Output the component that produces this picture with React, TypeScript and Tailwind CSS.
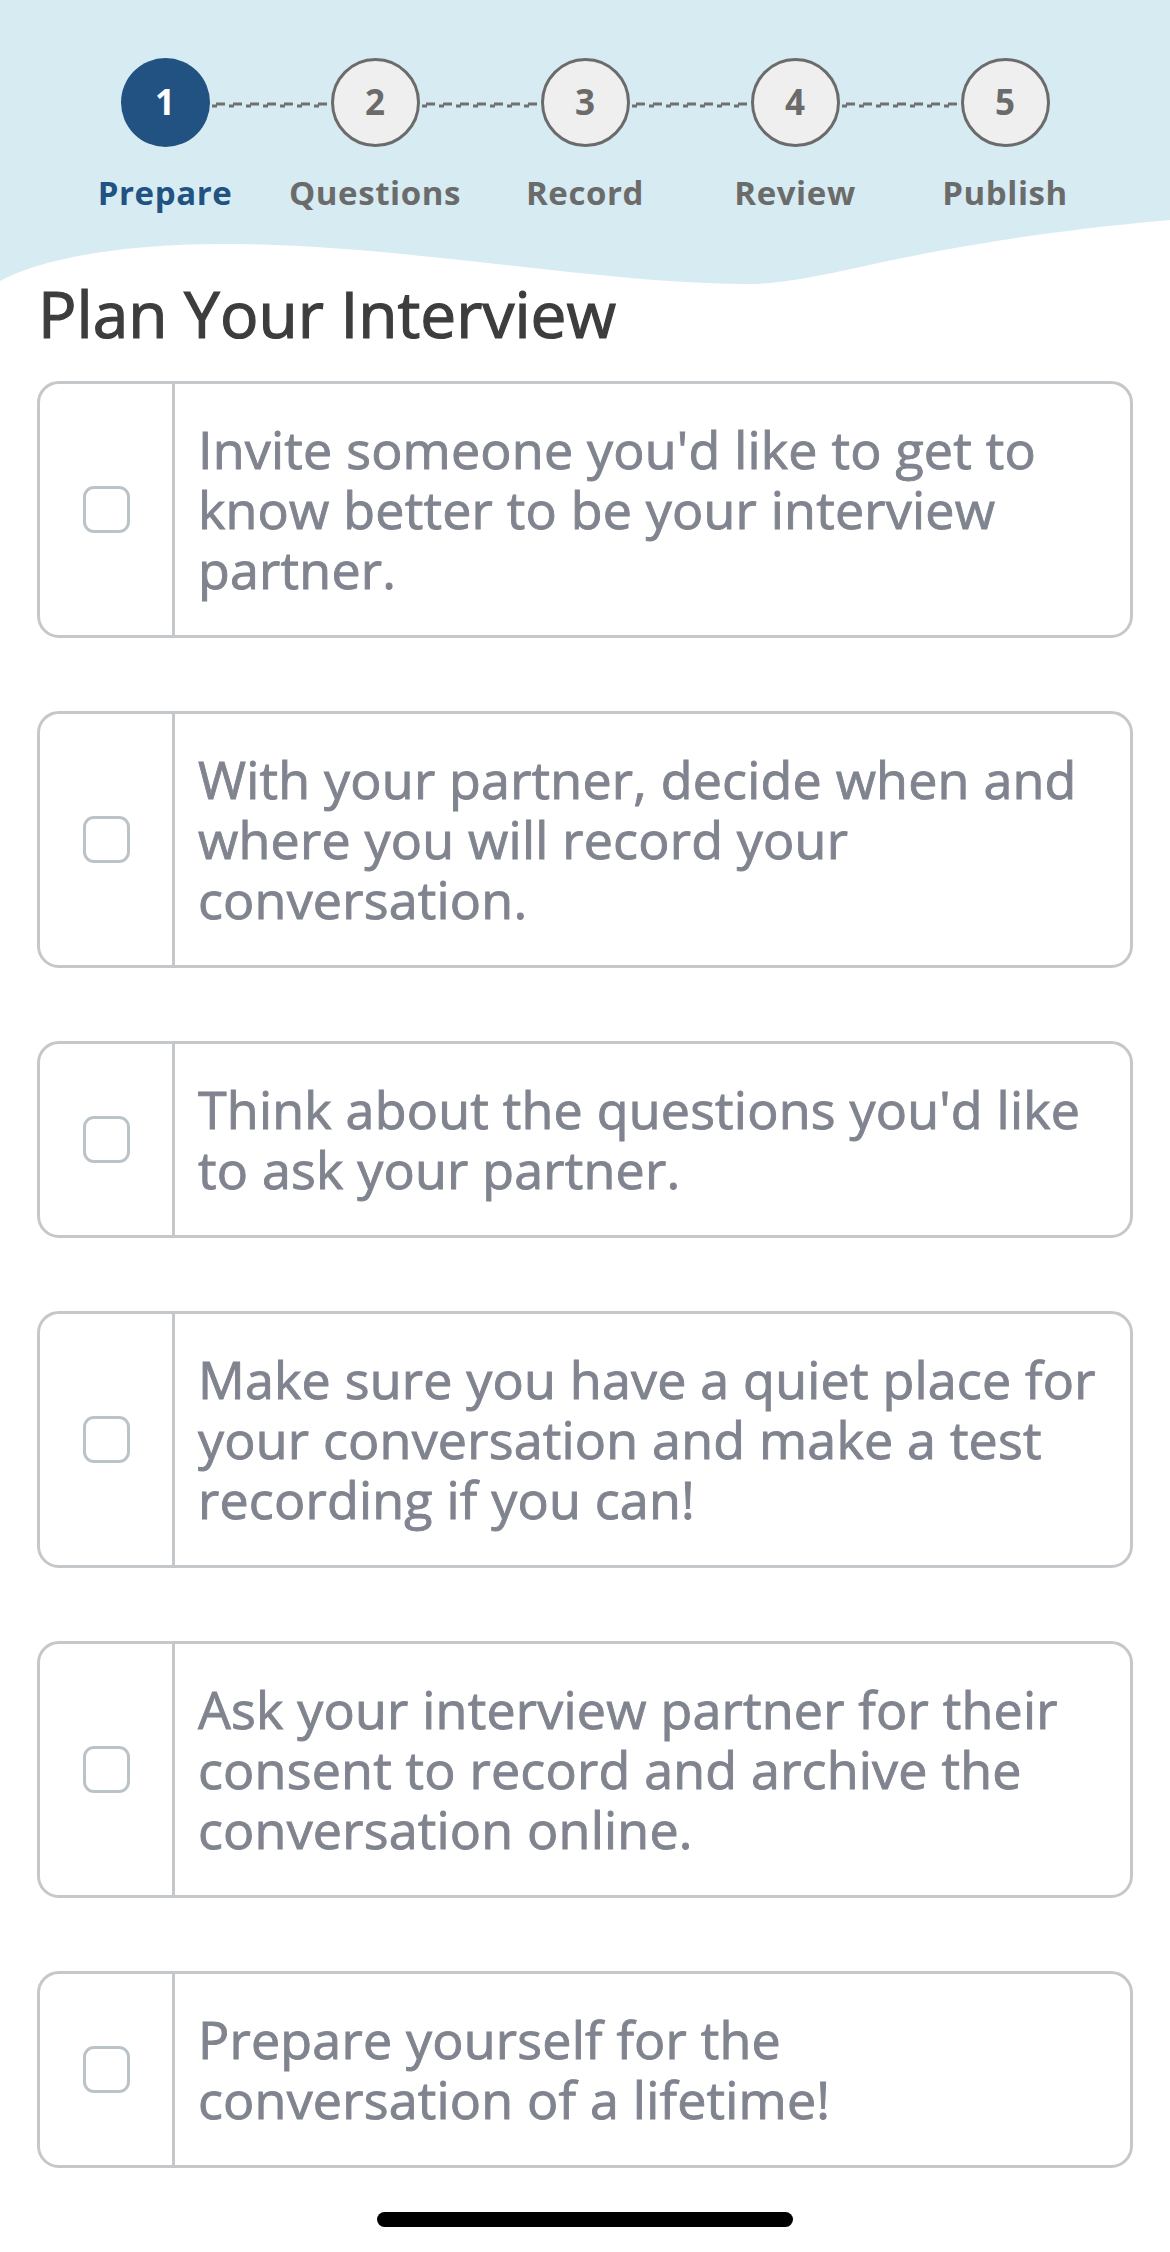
import React from "react";

const steps = [
  { n: "1", label: "Prepare", active: true },
  { n: "2", label: "Questions", active: false },
  { n: "3", label: "Record", active: false },
  { n: "4", label: "Review", active: false },
  { n: "5", label: "Publish", active: false },
];

const tasks = [
  "Invite someone you'd like to get to\nknow better to be your interview\npartner.",
  "With your partner, decide when and\nwhere you will record your\nconversation.",
  "Think about the questions you'd like\nto ask your partner.",
  "Make sure you have a quiet place for\nyour conversation and make a test\nrecording if you can!",
  "Ask your interview partner for their\nconsent to record and archive the\nconversation online.",
  "Prepare yourself for the\nconversation of a lifetime!",
];

function Connector() {
  const dashes = [0, 1, 2, 3, 4, 5, 6];
  return (
    <svg width="121" height="7" viewBox="0 0 121 7" className="block">
      {dashes.map((i) => (
        <g key={i} fill="#707070">
          <rect x={2 + i * 17} y={3.5} width={5} height={3} />
          <rect x={6 + i * 17} y={1.5} width={9} height={3} />
        </g>
      ))}
    </svg>
  );
}

export default function App() {
  return (
    <div
      className="w-[1170px] bg-white"
      style={{ fontFamily: '"Open Sans", "Liberation Sans", sans-serif' }}
    >
      <div className="bg-[#d7ebf2] pt-[58px] pb-[5px]">
        <div className="flex items-start justify-center">
          {steps.map((s, i) => (
            <React.Fragment key={s.n}>
              {i > 0 && (
                <div className="flex h-[89px] items-center pt-[4px]">
                  <Connector />
                </div>
              )}
              <div className="flex w-[89px] flex-col items-center">
                <div
                  className={
                    s.active
                      ? "flex h-[89px] w-[89px] items-center justify-center rounded-full bg-[#225282] text-[35px] font-bold text-white"
                      : "flex h-[89px] w-[89px] items-center justify-center rounded-full border-[3px] border-[#6b6b6b] bg-[#efefef] text-[35px] font-bold text-[#6b6b6b]"
                  }
                >
                  {s.n}
                </div>
                <div
                  className={
                    s.active
                      ? "mt-[25px] whitespace-nowrap text-[33px] leading-[42px] font-bold tracking-[0.6px] text-[#225282]"
                      : "mt-[25px] whitespace-nowrap text-[33px] leading-[42px] font-bold tracking-[0.6px] text-[#6b6b6b]"
                  }
                >
                  {s.label}
                </div>
              </div>
            </React.Fragment>
          ))}
        </div>
      </div>
      <svg
        width="1170"
        height="66"
        viewBox="0 0 1170 66"
        className="block"
        preserveAspectRatio="none"
      >
        <path
          d="M0 62 C 40 40 120 25 224 25 C 400 25 600 65 746 65 C 830 65 900 25 1170 1 L 1170 0 L 0 0 Z"
          fill="#d7ebf2"
        />
      </svg>
      <h1 className="relative -mt-[10px] pl-[38px] text-[64px] leading-[77px] font-normal text-[#3d3d3d] [-webkit-text-stroke:1.2px_#3d3d3d]">
        Plan Your Interview
      </h1>
      <div className="mt-[29px] flex flex-col gap-[73px] px-[37px]">
        {tasks.map((t, i) => (
          <div
            key={i}
            className="flex rounded-[22px] border-[3px] border-[#c5c8cb] bg-white"
          >
            <div className="flex w-[135px] shrink-0 items-center justify-center border-r-[3px] border-[#c5c8cb]">
              <div className="h-[47px] w-[47px] rounded-[11px] border-[3px] border-[#b9c3c8] bg-white" />
            </div>
            <div className="flex-1 whitespace-pre-line pt-[35px] pb-[36px] pl-[23px] pr-[20px] text-[52px] leading-[60px] font-normal tracking-[0.2px] text-[#80848f] [-webkit-text-stroke:0.9px_#80848f]">
              {t}
            </div>
          </div>
        ))}
      </div>
      <div className="mt-[44px] flex justify-center pb-[24px]">
        <div className="h-[15px] w-[416px] rounded-full bg-black" />
      </div>
    </div>
  );
}
